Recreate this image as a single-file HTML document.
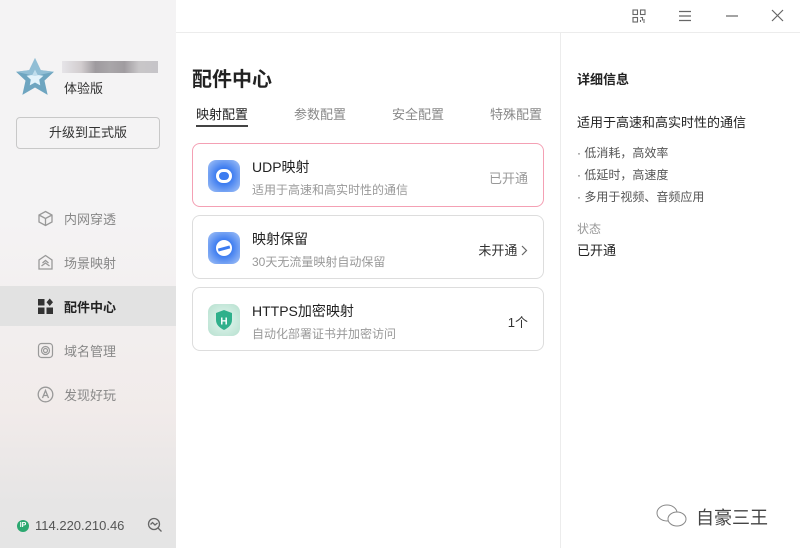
<!DOCTYPE html>
<html><head><meta charset="utf-8"><style>
*{margin:0;padding:0;box-sizing:border-box}
body{width:800px;height:548px;overflow:hidden;font-family:"Liberation Sans","Noto Sans CJK SC",sans-serif;background:#fff;position:relative;color:#222}
.side{position:absolute;left:0;top:0;width:176px;height:548px;background:linear-gradient(#f4f3f4 0,#f4f3f4 40%,#f1ebea 75%,#e6e5e5 92%,#e5e5e5 100%)}
.abs{position:absolute}
.nav{position:absolute;left:0;width:176px;height:40px;display:flex;align-items:center;padding-left:37px;font-size:13px;color:#888}
.nav svg{margin-right:10px}
.nav.act{background:#e2e2e2;color:#222;font-weight:bold}
.hdr{position:absolute;left:176px;top:32px;width:624px;height:1px;background:#ececec}
.vline{position:absolute;left:560px;top:33px;width:1px;height:515px;background:#ececec}
.card{position:absolute;left:192px;width:352px;height:64px;border:1px solid #ddd;border-radius:8px;background:#fff}
.card .ic{position:absolute;left:15px;top:16px;width:32px;height:32px;border-radius:8px}
.card .t{position:absolute;left:59px;top:13px;font-size:14px;color:#222}
.card .s{position:absolute;left:59px;top:37px;font-size:12px;color:#999}
.card .r{position:absolute;right:15px;top:24px;font-size:13px}
.tab{position:absolute;top:104px;font-size:13px;color:#888}
</style></head><body>
<div class="side">
  <svg class="abs" style="left:15px;top:57px" width="40" height="40" viewBox="0 0 38 38"><path d="M19 1 L24.5 12.5 L37 14 L28 22.5 L31 36 L19 29 L7 36 L10 22.5 L1 14 L13.5 12.5 Z" fill="#6ea5c0"/><path d="M19 12 L21.5 17 L27 17.8 L23 21.5 L24 27 L19 24.2 L14 27 L15 21.5 L11 17.8 L16.5 17 Z" fill="#e3f3fb"/><path d="M19 1 L24.5 12.5 L37 14 L19 18 L1 14 L13.5 12.5Z" fill="#a9cfe2" opacity=".6"/></svg>
  <div class="abs" style="left:62px;top:61px;width:96px;height:12px;background:linear-gradient(90deg,#e6e4e8 0,#d2cdcf 20%,#9e9a9e 35%,#a9a6a9 50%,#a09ca0 65%,#c8c6c8 80%,#c6c4c8 100%)"></div>
  <div class="abs" style="left:64px;top:78px;font-size:13px;color:#333">体验版</div>
  <div class="abs" style="left:16px;top:117px;width:144px;height:32px;border:1px solid #c8c8c8;border-radius:4px;font-size:13px;text-align:center;line-height:30px;color:#333">升级到正式版</div>
  <div class="nav" style="top:198px"><svg width="17" height="17" viewBox="0 0 17 17" fill="none" stroke="#999" stroke-width="1.3"><path d="M8.5 1.5 L15 5 V12 L8.5 15.5 L2 12 V5 Z M2 5 L8.5 8.5 L15 5 M8.5 8.5 V15.5"/></svg>内网穿透</div>
  <div class="nav" style="top:242px"><svg width="17" height="17" viewBox="0 0 17 17" fill="none" stroke="#999" stroke-width="1.3"><path d="M8.5 1.5 L15 6 V15 H2 V6 Z M4.5 12 L8.5 9 L12.5 12 M5.5 9 L8.5 6.5 L11.5 9"/></svg>场景映射</div>
  <div class="nav act" style="top:286px"><svg width="17" height="17" viewBox="0 0 17 17" fill="#333"><rect x="1" y="1" width="6.5" height="6.5"/><rect x="1" y="9.5" width="6.5" height="6.5"/><rect x="9.5" y="9.5" width="6.5" height="6.5"/><path d="M12.75 0.5 L16 4.25 L12.75 8 L9.5 4.25Z"/></svg>配件中心</div>
  <div class="nav" style="top:330px"><svg width="17" height="17" viewBox="0 0 17 17" fill="none" stroke="#999" stroke-width="1.2"><rect x="1.5" y="1.5" width="14" height="14" rx="3"/><circle cx="8.5" cy="8.5" r="4"/><circle cx="8.5" cy="8.5" r="2"/></svg>域名管理</div>
  <div class="nav" style="top:374px"><svg width="17" height="17" viewBox="0 0 17 17" fill="none" stroke="#999" stroke-width="1.3"><circle cx="8.5" cy="8.5" r="7.3"/><path d="M5.5 12 L8.5 4.5 L11.5 12 M6.5 9.5 H10.5"/></svg>发现好玩</div>
  <div class="abs" style="left:17px;top:520px;width:12px;height:12px;border-radius:50%;background:#2ca870;color:#fff;font-size:7px;line-height:12px;text-align:center;font-weight:bold">IP</div>
  <div class="abs" style="left:35px;top:518px;font-size:13px;color:#555">114.220.210.46</div>
  <svg class="abs" style="left:147px;top:517px" width="16" height="16" viewBox="0 0 16 16" fill="none" stroke="#666" stroke-width="1.3"><circle cx="7" cy="7" r="5.5"/><path d="M3.5 7.5 L5.5 5.5 L8 8 L10.5 6 M11 11 L14.5 14.5"/></svg>
</div>
<div class="hdr"></div><div class="vline"></div>
<svg class="abs" style="left:632px;top:9px" width="14" height="14" viewBox="0 0 14 14" fill="none" stroke="#666" stroke-width="1.1"><rect x="1" y="1" width="4.5" height="4.5"/><rect x="8.5" y="1" width="4.5" height="4.5"/><rect x="1" y="8.5" width="4.5" height="4.5"/><path d="M8.5 8.5 H10.5 V11 H13 M8.5 11 V13 M11 13 H13"/></svg>
<svg class="abs" style="left:678px;top:10px" width="14" height="12" viewBox="0 0 14 12" stroke="#666" stroke-width="1.2"><path d="M1 1.5H13M1 6H13M1 10.5H13"/></svg>
<svg class="abs" style="left:725px;top:10px" width="14" height="12" viewBox="0 0 14 12" stroke="#666" stroke-width="1.2"><path d="M1 6H13"/></svg>
<svg class="abs" style="left:771px;top:9px" width="13" height="13" viewBox="0 0 13 13" stroke="#666" stroke-width="1.2"><path d="M1 1L12 12M12 1L1 12"/></svg>

<div class="abs" style="left:192px;top:63px;font-size:20px;font-weight:bold;color:#222">配件中心</div>
<div class="tab" style="left:196px;color:#222">映射配置</div>
<div class="abs" style="left:196px;top:125px;width:52px;height:2px;background:#444"></div>
<div class="tab" style="left:294px">参数配置</div>
<div class="tab" style="left:392px">安全配置</div>
<div class="tab" style="left:490px">特殊配置</div>

<div class="card" style="top:143px;border-color:#f4a0b4">
  <div class="ic" style="background:radial-gradient(circle,#3d7cf0 35%,#a9c6f6 100%)"><div style="position:absolute;left:8px;top:9px;width:16px;height:14px;border:3px solid #fff;border-radius:7px"></div><div style="position:absolute;left:14px;top:13px;width:4px;height:6px;background:#3d7cf0"></div></div>
  <div class="t">UDP映射</div><div class="s">适用于高速和高实时性的通信</div><div class="r" style="color:#999">已开通</div>
</div>
<div class="card" style="top:215px">
  <div class="ic" style="background:radial-gradient(circle,#3d7cf0 35%,#a9c6f6 100%)"><div style="position:absolute;left:8px;top:8px;width:16px;height:16px;border-radius:50%;background:#fff"></div><div style="position:absolute;left:10px;top:15px;width:12px;height:2.5px;background:#3d7cf0;transform:rotate(-15deg)"></div></div>
  <div class="t">映射保留</div><div class="s">30天无流量映射自动保留</div><div class="r" style="color:#333">未开通 <svg width="7" height="11" viewBox="0 0 7 11" fill="none" stroke="#666" stroke-width="1.2" style="vertical-align:-1px"><path d="M1 1L5.5 5.5L1 10"/></svg></div>
</div>
<div class="card" style="top:287px">
  <div class="ic" style="background:radial-gradient(circle,#d6f0e6 30%,#b7e0cf 100%)"><svg style="position:absolute;left:6px;top:5px" width="20" height="22" viewBox="0 0 20 22"><path d="M10 1 L18 4 V11 C18 16 14 19 10 21 C6 19 2 16 2 11 V4 Z" fill="#2fb08b"/><text x="10" y="15.5" font-size="10" font-weight="bold" fill="#fff" text-anchor="middle" font-family="Liberation Sans">H</text></svg></div>
  <div class="t">HTTPS加密映射</div><div class="s">自动化部署证书并加密访问</div><div class="r" style="color:#333">1个</div>
</div>

<div class="abs" style="left:577px;top:69px;font-size:13px;font-weight:bold;color:#222">详细信息</div>
<div class="abs" style="left:577px;top:112px;font-size:13px;color:#222">适用于高速和高实时性的通信</div>
<div class="abs" style="left:577px;top:142px;font-size:12px;color:#555;line-height:22px">· 低消耗，高效率<br>· 低延时，高速度<br>· 多用于视频、音频应用</div>
<div class="abs" style="left:577px;top:220px;font-size:12px;color:#999">状态</div>
<div class="abs" style="left:577px;top:240px;font-size:13px;color:#222">已开通</div>

<svg class="abs" style="left:655px;top:502px" width="34" height="28" viewBox="0 0 34 28" fill="none" stroke="#888" stroke-width="1"><ellipse cx="12" cy="11" rx="10" ry="8"/><ellipse cx="22" cy="17" rx="9" ry="7" fill="#fff"/></svg>
<div class="abs" style="left:696px;top:504px;font-size:18px;color:#444">自豪三王</div>
</body></html>
